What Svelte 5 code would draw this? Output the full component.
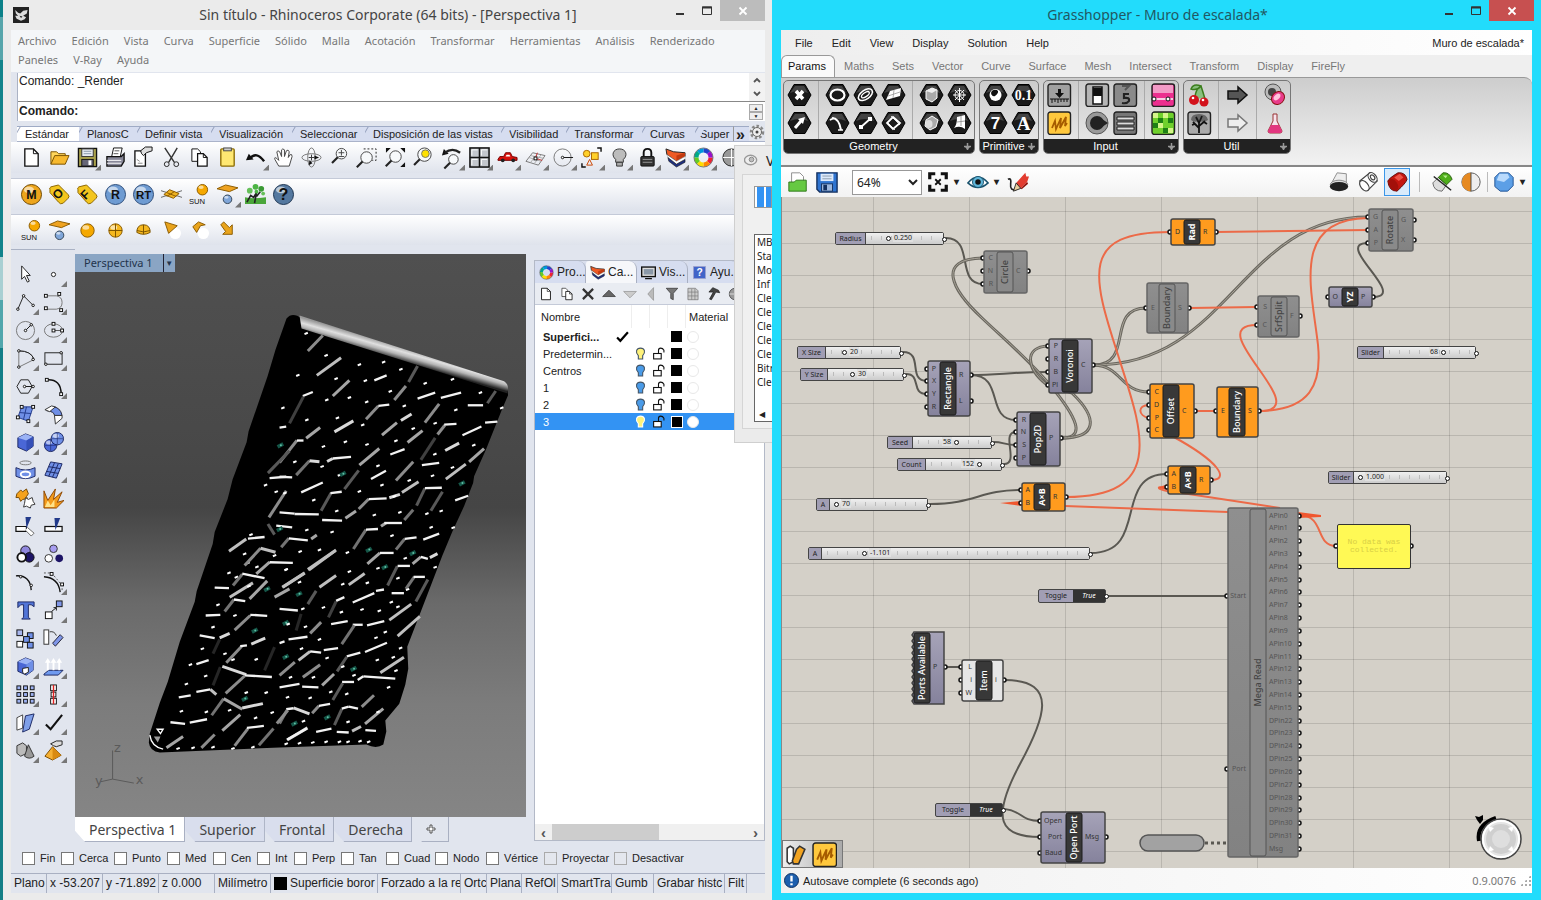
<script>
  const menu = ['Archivo', 'Edición', 'Vista', 'Curva', 'Superficie', 'Sólido', 'Malla', 'Acotación', 'Transformar', 'Herramientas', 'Análisis', 'Renderizado', 'Paneles', 'V-Ray', 'Ayuda'];
  const toolTabs = [['Estándar', 62], ['PlanosC', 58], ['Definir vista', 74], ['Visualización', 81], ['Seleccionar', 73], ['Disposición de las vistas', 136], ['Visibilidad', 65], ['Transformar', 76], ['Curvas', 53], ['Super', 38]];

  const k = 'fill="none" stroke="#222"';
  const g = 'fill="none" stroke="#777"';
  const sq = (x, y, f = '#fff', s = 3) => `<rect x="${x - s / 2}" y="${y - s / 2}" width="${s}" height="${s}" fill="${f}" stroke="#111"/>`;
  const dot = (x, y) => `<circle cx="${x}" cy="${y}" r="1.3" fill="#fff" stroke="#111"/>`;
  const ball = (x, y, r, f, s) => `<circle cx="${x}" cy="${y}" r="${r}" fill="${f}" stroke="${s}"/><ellipse cx="${x - r / 4}" cy="${y - r / 2.2}" rx="${r / 2}" ry="${r / 3}" fill="#fff" opacity=".6"/>`;
  const coin = (t, f, s, size = 13) => ball(11, 11, 10.5, f, s) + `<text x="11" y="${11 + size * 0.36}" text-anchor="middle" font-family="Liberation Sans, sans-serif" font-weight="700" font-size="${size}" fill="#111">${t}</text>`;
  const tag = (t) => `<path d="M1 6Q0 4 2 3L10 1L20 11Q22 13 20 15L15 20Q12 22 10 19L1 9Z" fill="#f3c51e" stroke="#8a6500"/><text transform="translate(9 17) rotate(-45)" font-family="Liberation Sans, sans-serif" font-weight="700" font-size="13" fill="#111">${t}</text>`;
  const lens = (x, y, r) => `<circle cx="${x}" cy="${y}" r="${r}" fill="#f7f9fb" stroke="#444"/><path d="M${x - r * 0.7} ${y + r * 0.7}L${x - r * 0.7 - 6} ${y + r * 0.7 + 6}" stroke="#222" stroke-width="2.2"/>`;
  const sun = ball(14, 6, 5.5, '#f5a800', '#8a5a00') + '<text x="0" y="21" font-family="Liberation Sans, sans-serif" font-size="8" fill="#111">SUN</text>';
  const plane = '<path d="M0 5L9 1L22 4L13 8Z" fill="#efa321" stroke="#8a5a00"/>' + ball(11, 16, 4.5, '#7fa5d8', '#345');
  const sheet = '<path d="M4 2H13L18 7V20H4Z" fill="#fff" stroke="#111" stroke-width="1.4"/><path d="M13 2V7H18" fill="none" stroke="#111"/>';
  const brick = '<path d="M1 2L9 5L21 6V10L12 15L2 8Z" fill="#ee5a24" stroke="#222"/><path d="M12 15V9L21 6V10Z" fill="#c23a10"/><path d="M2 8L12 15L21 10V13L12 18L3 11Z" fill="#fff" stroke="#999" stroke-width=".5"/><path d="M3 11L12 18L21 13V16L12 21L4 15Z" fill="#1e2f80" stroke="#111" stroke-width=".6"/>';
  const wheelColors = ['#e23', '#f80', '#fd0', '#6c2', '#0a8', '#09d', '#24c', '#91c'];
  const wheel = wheelColors.map((c, i) => `<circle cx="11" cy="11" r="7.5" fill="none" stroke="${c}" stroke-width="4.5" stroke-dasharray="5.9 41.3" stroke-dashoffset="${-i * 5.89}"/>`).join('') + '<circle cx="11" cy="11" r="10" fill="none" stroke="#333" stroke-width=".6"/>';
  const bulb = (f) => `<path d="M7 13C2 9 4 2 11 2S20 9 15 13V16H7Z" fill="${f}" stroke="#333"/><path d="M8 16H14V20H8Z" fill="#aaa" stroke="#333"/>`;
  const cube = (f, h, d) => `<path d="M3 6L11 2L19 5V15L12 20L3 16Z" fill="${f}" stroke="#1b2762"/><path d="M3 6L11 2L19 5L12 9Z" fill="${h}"/><path d="M12 9L19 5V15L12 20Z" fill="${d}"/>`;
  const blue = '#6f8fe6';

  const icons = {
    new: sheet,
    open: '<path d="M2 18V5H8L10 7H17V10" fill="#ffd65c" stroke="#7a5200"/><path d="M2 18L6 9H21L17 18Z" fill="#f7b92e" stroke="#7a5200"/>',
    save: '<rect x="1.5" y="1.5" width="19" height="19" fill="#a9a14c" stroke="#111" stroke-width="1.4"/><rect x="5" y="2" width="12" height="8" fill="#e7ebf3" stroke="#333"/><path d="M7 4.500H15M7 7H15" stroke="#89a"/><rect x="5" y="13" width="12" height="7" fill="#667" stroke="#111"/><rect x="12" y="14" width="3" height="5" fill="#fff"/>',
    print: '<path d="M7 10L9 1H18L16 10Z" fill="#fff" stroke="#111"/><path d="M2 10H17L20 7V15L17 20H2Z" fill="#889" stroke="#111" stroke-width="1.4"/><path d="M2 14H17M2 17H17" stroke="#fff"/><path d="M10 4H15M9 7H14" stroke="#555"/>',
    props: '<path d="M2 4H13V20H2Z" fill="#fff" stroke="#111" stroke-width="1.4"/><path d="M8 4L13 0H20V4L14 6L11 9L9 7Z" fill="#ddd" stroke="#111"/><path d="M4 13L7 15M5 17H10" stroke="#888"/>',
    cut: `<path d="M4 1L14 16M17 1L8 16" stroke="#333" stroke-width="1.5"/><circle cx="6" cy="18" r="2.500" ${k}/><circle cx="16" cy="18" r="2.500" ${k}/>`,
    copy: '<path d="M3 2H9L12 5V15H3Z" fill="#fff" stroke="#111"/><path d="M9 7H15L19 11V20H9Z" fill="#fff" stroke="#111" stroke-width="1.3"/><path d="M15 7V11H19" fill="none" stroke="#111"/>',
    paste: '<rect x="4" y="2" width="14" height="18" rx="1" fill="#ffe872" stroke="#8a6a00" stroke-width="1.4"/><rect x="7" y="1" width="8" height="3" fill="#ccc" stroke="#444"/>',
    undo: '<path d="M1 14L4 7L9 13Z" fill="#111"/><path d="M5 12Q12 4 20 15" fill="none" stroke="#111" stroke-width="2.500"/>',
    hand: '<path d="M6 20L2 13Q1 10 4 12L6 14L4 5Q5 3 7 5L9 10L9 3Q10 1 12 3V10L14 4Q16 2 17 5L16 11L18 8Q20 7 20 10L17 20Z" fill="#fff" stroke="#444"/>',
    orbit: `<ellipse cx="11" cy="11" rx="10" ry="4" ${g}/><ellipse cx="11" cy="11" rx="4" ry="10" ${g}/><path d="M8 11H14M11 8V14" stroke="#333"/><path d="M9 14L12 17L8 19ZM14 9L19 11L14 13Z" fill="#111"/>`,
    zoom: lens(13, 7, 5.5) + '<path d="M10 6H16M13 3V9M10 10H16" stroke="#444"/>',
    zoomWin: lens(10, 11, 6) + `<path d="M7 2H20V14H16" ${k} stroke-dasharray="2 2"/>`,
    zoomExt: lens(11, 10, 6) + '<path d="M1 1H6L1 6ZM21 1H16L21 6ZM21 21H16L21 16Z" fill="#111"/>',
    zoomSel: lens(12, 8, 7) + '<circle cx="13" cy="7" r="4" fill="#ffe100" stroke="#776"/>',
    zoomPrev: lens(13, 13, 5) + '<path d="M1 9L3 2L8 7Z" fill="#111"/><path d="M4 6Q12 0 20 6" fill="none" stroke="#222" stroke-width="2.500"/>',
    four: '<rect x="1" y="1" width="20" height="20" fill="#c3c7cd" stroke="#111" stroke-width="1.600"/><path d="M11 1V21M1 11H21" stroke="#111" stroke-width="1.600"/><path d="M3 9V3H9M13 9V3H19M3 19V13H9M13 19V13H19" fill="none" stroke="#fff"/>',
    car: '<path d="M1 13L3 10L7 10L9 6H14L16 10L21 11V14H1Z" fill="#d8120c" stroke="#700"/><circle cx="6" cy="14" r="2" fill="#222"/><circle cx="17" cy="14" r="2" fill="#222"/><path d="M10 8H13L14 10H9Z" fill="#fff"/>',
    cplane: `<path d="M1 15L8 6L21 9L14 19Z" ${g}/><path d="M4 11L17 15M6 9L20 12M6 16L13 7M10 17L17 8" stroke="#aaa"/><path d="M11 12L18 14M11 12L13 6" stroke="#c33"/>` + sq(11, 12),
    circleView: `<circle cx="10" cy="11" r="9" ${g}/><path d="M10 11H21" stroke="#111"/>` + dot(10, 11),
    named: '<circle cx="6" cy="7" r="3.500" fill="#ffd12b" stroke="#a60"/><rect x="11" y="6" width="7" height="7" fill="#ffd12b" stroke="#a60"/><path d="M6 19L9 13L12 19Z" fill="none" stroke="#c40"/><path d="M17 1H21V5M1 17V21H5" fill="none" stroke="#111" stroke-width="1.5"/>',
    bulbGray: bulb('#bcbcbc'),
    lock: '<path d="M7 10V6Q7 2 11 2T15 6V10" fill="none" stroke="#111" stroke-width="2"/><rect x="4" y="10" width="14" height="10" rx="1" fill="#333" stroke="#111"/><path d="M6 13H16M6 16H16" stroke="#999"/>',
    layers: brick,
    wheel,
    globe: '<circle cx="11" cy="11" r="9" fill="#999" stroke="#222"/><path d="M11 2V20M2 11H20" stroke="#fff"/>',
    m: coin('M', '#eda51c', '#6b4500'), o: tag('O'), f: tag('F'), r: coin('R', '#6e9bd2', '#2b4a78'), rt: coin('RT', '#6e9bd2', '#2b4a78', 12),
    vplane: '<path d="M0 7L22 14M0 14L22 7" stroke="#666"/><path d="M3 11L9 6L19 10L13 15Z" fill="#efb321" stroke="#8a5a00"/><path d="M6 9L16 13M6 13L14 8" stroke="#8a5a00"/>',
    sun, plane,
    tree: '<path d="M0 20V14Q8 16 22 14V21H0Z" fill="#4aa63a"/><path d="M2 19L6 12L9 14L12 9L10 20M12 13L16 8" fill="none" stroke="#222" stroke-width="1.700"/><circle cx="11" cy="3" r="3" fill="#4cb444"/><circle cx="5" cy="7" r="3" fill="#65c059"/><circle cx="17" cy="5" r="3" fill="#3a9a35"/><circle cx="19" cy="10" r="2" fill="#65c059"/><circle cx="12" cy="8" r="2" fill="#4cb444"/>',
    help: coin('?', '#54789f', '#1c3350', 17),
    orb: ball(11, 11, 7, '#f5a800', '#8a5a00'),
    orbGrid: ball(11, 11, 7, '#f5b820', '#8a5a00') + '<path d="M11 4V18M4 11H18" stroke="#7a5200"/>',
    dome: '<path d="M4 13Q4 5 11 5T18 13Q11 17 4 13Z" fill="#f5b820" stroke="#7a5200"/><path d="M11 5V15M4 11Q11 14 18 11" fill="none" stroke="#7a5200"/>',
    spot: '<circle cx="15" cy="14" r="6" fill="#fff"/><path d="M4 2L17 6L8 14Z" fill="#e9a41c" stroke="#8a5a00"/>',
    ies: '<circle cx="15" cy="14" r="6" fill="#fff"/><path d="M4 7L10 2L17 5L12 6L8 13Z" fill="#e9a41c" stroke="#8a5a00"/>',
    arrowDir: '<path d="M4 5L7 2L13 8L16 5V15H6L9 12Z" fill="#e9a41c" stroke="#8a5a00"/>',
    pointer: '<path d="M7 2V16L10 13L13 19L15 18L12 12H16Z" fill="#fff" stroke="#222"/>',
    point: '<circle cx="11" cy="11" r="2.2" fill="#fff" stroke="#222"/>',
    polyline: `<path d="M3 18L9 4L19 14" ${k}/>` + dot(3, 18) + dot(9, 4) + dot(19, 14),
    curve: `<path d="M3 4H14Q20 5 20 11T14 18H3" ${g}/>` + sq(3, 4) + sq(3, 17) + sq(17, 2) + sq(19, 19),
    circle: `<circle cx="11" cy="11" r="9.500" ${g}/><path d="M11 11L17 5" stroke="#111"/>` + dot(11, 11) + dot(17, 5),
    ellipse: `<ellipse cx="11" cy="11" rx="9.500" ry="7" ${g}/><path d="M11 11H20" stroke="#555"/>` + sq(11, 11) + sq(11, 4) + sq(20, 11),
    arc: `<path d="M4 20V3Q17 3 20 12Z" ${g}/><path d="M4 3Q17 3 20 12" ${k}/>` + dot(4, 20) + dot(4, 3) + dot(19, 12),
    rect: `<rect x="2" y="5" width="18" height="12" ${k}/>` + dot(3, 17) + dot(19, 5),
    polygon: `<path d="M2 11L6 4H14L18 11L14 18H6Z" ${k}/><path d="M10 11H19" stroke="#111"/>` + dot(10, 11) + dot(19, 11),
    fillet: '<path d="M4 4Q19 3 19 19" fill="none" stroke="#111" stroke-width="1.600"/>' + sq(4, 4) + sq(19, 19),
    surface: `<path d="M7 3H19L14 18L3 14Z" fill="${blue}" stroke="#223a8a"/><path d="M12 3L9 16M5 9L17 10" stroke="#223a8a"/>` + sq(7, 3) + sq(19, 3) + sq(3, 14) + sq(14, 18),
    blend: `<path d="M10 3Q18 3 20 12L12 12Q12 8 4 7Z" fill="${blue}" stroke="#223"/><path d="M2 6L9 2L13 3L7 8ZM12 12L20 12V15L13 21Z" fill="#fff" stroke="#333"/>`,
    box: cube('#4a67d6', '#9bb3f5', '#3550b8'),
    spheres: ball(8, 14, 6.5, '#4a67d6', '#1b2762') + ball(15, 7, 6.5, '#6f8fe6', '#1b2762') + '<path d="M15 1V13M9 7H21M8 8V20M2 14H14" stroke="#1b2762" stroke-width=".6"/>',
    project: `<ellipse cx="11" cy="3" rx="6" ry="2" ${g}/><path d="M1 8Q11 13 21 8V17Q11 22 1 17Z" fill="${blue}" stroke="#1b2762"/><ellipse cx="11" cy="15" rx="5" ry="3" fill="none" stroke="#fff" stroke-width="2"/>`,
    meshIcon: `<path d="M8 2L20 4L14 19L2 16Z" fill="${blue}" stroke="#1b2762"/><path d="M12 3L6 17M16 4L10 18M6 7L18 9M4 12L16 14" stroke="#1b2762"/>`,
    puzzle: '<path d="M2 6L6 2L8 4L12 1L14 6L12 9L13 11L8 12L6 14L4 10L1 10Z" fill="#f5a21c" stroke="#734600"/><path d="M11 10L14 12L18 10L19 14L21 17L17 18L16 21L12 19L9 20L10 16Z" fill="#fff" stroke="#333"/>',
    explode: '<path d="M1 21V3L5 13L13 1L11 12L20 4L15 15L22 13L14 21Z" fill="#f49b1c" stroke="#8a4500"/><path d="M2 20L5 13L8 18L12 12L12 20Z" fill="#ffe28a"/>',
    trim: '<path d="M1 11H12V16H1Z" fill="#fff" stroke="#111" stroke-width="1.300"/><path d="M11 1H17L12 13Z" fill="#223a8a"/><path d="M13 12L20 18L17 21L11 15" fill="#fff" stroke="#666"/>',
    split: '<rect x="2" y="11" width="18" height="5" fill="#fff" stroke="#111" stroke-width="1.300"/><path d="M12 2H18L13 15Z" fill="#223a8a"/>',
    group: '<circle cx="11" cy="7" r="5" fill="#8f86dc" stroke="#111"/><circle cx="15" cy="14" r="5" fill="#1d1466" stroke="#111"/><circle cx="7" cy="14" r="4.500" fill="#fff" stroke="#111" stroke-width="2"/>',
    ungroup: '<circle cx="11" cy="5" r="4" fill="#a79df0" stroke="#333"/><circle cx="6" cy="15" r="4" fill="#fff" stroke="#333"/><circle cx="17" cy="15" r="4" fill="#1d1466"/>',
    editPts: '<path d="M1 4Q16 3 17 19" fill="none" stroke="#111" stroke-width="1.400"/>' + dot(6, 5) + dot(17, 14),
    ctrlPts: '<path d="M1 5Q16 6 18 21" fill="none" stroke="#111" stroke-width="1.400"/><path d="M1 1H9L20 14V20" fill="none" stroke="#555" stroke-dasharray="2 2"/>' + sq(9, 2) + sq(20, 13),
    text: '<path d="M3 2H20V7L17 5H14V18L16 20H7L9 18V5H6L3 8Z" fill="#5275d8" stroke="#1b2762"/>',
    move: sq(6, 16, '#fff', 7) + sq(17, 4, '#7f96e8', 6) + '<path d="M9 12L14 8M14 8V11M14 8H11" stroke="#111" fill="none"/>',
    array: sq(5, 5, '#a8b6ee', 6) + sq(16, 8, blue, 6) + sq(12, 12, blue, 6) + sq(5, 17, '#fff', 6) + sq(16, 18, blue, 6),
    orient: '<rect x="1" y="2" width="5" height="15" fill="#fff" stroke="#333"/><path d="M18 7L21 10L13 19L10 16Z" fill="#7f96e8" stroke="#223"/><path d="M7 4Q12 3 14 8" fill="none" stroke="#333"/>',
    boxCut: cube('#4a67d6', '#9bb3f5', blue) + '<path d="M8 13L14 12V17L10 19L8 17Z" fill="#fff" stroke="#222"/>',
    normals: '<path d="M1 19L6 15H21L16 20H1Z" fill="#6f9af0" stroke="#1b2762"/><path d="M5 15V5M11 15V5M17 15V5" stroke="#fff" stroke-width="2"/><path d="M2 7L5 2L8 7ZM8 7L11 2L14 7ZM14 7L17 2L20 7Z" fill="#fff"/>',
    grid9: [4, 11, 18].map((x) => [4, 11, 18].map((y) => sq(x, y, '#9db1f2', 4)).join('')).join(''),
    align: sq(11, 4, '#fff', 6) + sq(11, 11, '#fff', 5) + sq(11, 18, '#fff', 6) + '<path d="M11 1V21" stroke="#d22" stroke-width="1.500" fill="none"/>',
    flip: '<path d="M2 6L8 3V17L2 19Z" fill="#fff" stroke="#444"/><path d="M11 4L20 2L15 18L8 21Z" fill="#7f9fe8" stroke="#1b2762"/>',
    check: '<path d="M3 13L8 18L20 3" fill="none" stroke="#111" stroke-width="2.200"/>',
    solids: '<path d="M2 6L8 3L12 6V14L6 17L2 14Z" fill="#bbb" stroke="#333"/><path d="M14 5L20 17Q15 21 10 17Z" fill="#999" stroke="#333"/>',
    pyramid: '<path d="M10 7L19 16L10 21L2 17Z" fill="#f5b033" stroke="#7a4a00"/><path d="M10 7L19 16L10 21Z" fill="#d98a10"/><path d="M8 4L14 1H20V5L14 7L11 6Z" fill="#ddd" stroke="#222"/>',
    del: '<path d="M3 3L19 19M19 3L3 19" stroke="#333" stroke-width="3.500"/>',
    up: '<path d="M1 15L11 5L21 15Z" fill="#666" stroke="#222"/>',
    down: '<path d="M1 7H21L11 17Z" fill="#ccc" stroke="#888"/>',
    left: '<path d="M15 1V21L6 11Z" fill="#bbb" stroke="#888"/>',
    filter: '<path d="M2 2H20L13 10V20L9 18V10Z" fill="#777" stroke="#222"/>',
    sheetGrid: '<path d="M3 2H15L19 6V20H3Z" fill="#ccc" stroke="#666"/><path d="M3 8H19M3 14H19M9 3V20M14 3V20" stroke="#777"/>',
    hammer: '<path d="M3 8L9 1L18 5L20 9L14 8L7 20L4 19L10 8Z" fill="#444" stroke="#111"/>',
    screen: '<rect x="1" y="3" width="20" height="14" fill="#ddd" stroke="#111" stroke-width="2"/><rect x="4" y="6" width="14" height="8" fill="#8a98a8"/><path d="M6 20H16" stroke="#111" stroke-width="2"/>',
    book: '<rect x="2" y="2" width="18" height="18" fill="#4264c8" stroke="#aac"/><text x="11" y="16" text-anchor="middle" font-family="Liberation Sans, sans-serif" font-weight="700" font-size="15" fill="#fff">?</text>',
    rhino: '<rect width="22" height="22" fill="#222"/><path d="M3 4L7 8L10 9L14 5L20 4L19 9L14 12L18 14L16 17L11 19L5 16L3 12L7 12L4 9Z" fill="#ddd"/><path d="M9 12L13 13L11 15Z" fill="#222"/>'
  };

  const std = ['new', 'open', 'save*', 'print', 'props', 'cut', 'copy', 'paste', 'undo*', 'hand', 'orbit', 'zoom', 'zoomWin', 'zoomExt', 'zoomSel', 'zoomPrev*', 'four*', 'car*', 'cplane*', 'circleView*', 'named*', 'bulbGray*', 'lock*', 'layers*', 'wheel*', 'globe'];
  const vray = ['m', 'o', 'f', 'r', 'rt', 'vplane', 'sun', 'plane*', 'tree', 'help'];
  const lights = ['sun', 'plane', 'orb', 'orbGrid', 'dome', 'spot', 'ies', 'arrowDir'];
  const palette = ['pointer', 'point*', 'polyline*', 'curve*', 'circle*', 'ellipse*', 'arc*', 'rect*', 'polygon*', 'fillet*', 'surface*', 'blend*', 'box*', 'spheres*', 'project*', 'meshIcon*', 'puzzle', 'explode', 'trim', 'split', 'group*', 'ungroup', 'editPts', 'ctrlPts*', 'text', 'move*', 'array', 'orient', 'boxCut*', 'normals*', 'grid9*', 'align*', 'flip*', 'check*', 'solids*', 'pyramid*'];
  const panelTools = ['new', 'copy', 'del', 'up', 'down', 'left', 'filter', 'sheetGrid', 'hammer', 'globe'];
  const panelTabs = [['wheel', 'Pro...'], ['layers', 'Ca...'], ['screen', 'Vis...'], ['book', 'Ayu...']];
  const layers = [['Superfici...', ''], ['Predetermin...', '#fff27a'], ['Centros', '#4a9be8'], ['1', '#4a9be8'], ['2', '#4a9be8'], ['3', '#fff27a']];
  const snaps = [['Fin', 39], ['Cerca', 53], ['Punto', 53], ['Med', 46], ['Cen', 44], ['Int', 37], ['Perp', 47], ['Tan', 45], ['Cuad', 49], ['Nodo', 51], ['Vértice', 58], ['Proyectar', 70], ['Desactivar', 76]];
  const status = [['Plano', 36], ['x -53.207', 56], ['y -71.892', 56], ['z 0.000', 56], ['Milímetro', 56], ['Superficie boror', 107], ['Forzado a la re', 83], ['Ortc', 26], ['Plana', 35], ['RefOl', 36], ['SmartTra', 54], ['Gumb', 42], ['Grabar histc', 71], ['Filt', 22]];
  const messages = ['MB', 'Sta', 'Mo', 'Inf', 'Cle', 'Cle', 'Cle', 'Cle', 'Cle', 'Bitr', 'Cle'];

  // Slits of the wall: x1 y1 x2 y2 and brightness, in thirds of a pixel from (280, 300).
  const slits = `85 155 130 108 5|112 228 185 175 7|160 290 210 243 6|285 243 322 228 9|70 290 100 278 9|30 372 72 292 2|345 302 380 260 5|388 248 415 200 3|415 298 468 280 9|485 296 546 280 9|260 360 297 320 5|297 320 330 316 9|308 408 353 370 6|365 364 397 344 8|437 370 480 314 5|625 312 650 275 3|566 318 612 318 9|165 398 222 365 8|80 417 122 385 6|0 490 52 424 5|52 424 72 424 9|143 487 160 478 8|160 478 215 473 9|385 430 430 394 6|475 406 497 378 5|495 376 532 374 9|550 408 607 382 9|240 498 300 448 6|333 466 376 450 9|425 482 468 416 2|498 454 540 432 8|618 370 655 367 9|570 488 615 448 6|50 528 90 485 4|90 485 120 488 8|275 540 320 515 9|195 570 238 514 3|350 544 402 488 5|428 498 480 491 9|500 540 560 495 7|528 604 567 590 9|65 580 130 550 9|125 635 155 582 3|153 582 187 578 9|238 630 268 600 5|268 600 322 598 9|330 596 362 586 8|368 580 418 548 7|412 620 437 568 3|437 567 488 566 9|455 635 490 578 3|0 640 45 644 9|45 645 118 646 9|128 663 188 665 9|198 658 230 636 6|375 663 402 632 4|305 682 320 672 6|315 672 368 672 9|432 722 480 704 9|222 750 260 692 4|260 692 296 690 9|5 745 28 718 4|28 718 85 724 9|95 720 112 708 6|350 752 376 720 4|376 720 412 715 9|264 795 302 762 6|302 762 343 762 9|85 812 170 753 7|8 865 76 822 7|120 865 170 830 7|208 858 256 824 7|400 795 425 774 6|425 774 446 780 9|452 776 475 764 8|325 860 354 802 3|355 801 392 801 9|380 870 405 834 4|403 834 437 834 9|410 908 446 842 3|85 916 110 876 3|170 906 195 895 9|220 911 285 883 9|290 876 314 872 9|337 883 374 883 9|0 930 55 935 9|147 956 170 908 2|330 964 396 916 7|355 1012 422 953 7|92 1004 125 970 5|155 976 205 967 9|220 978 250 978 9|263 980 315 967 9|187 1036 225 980 4|0 1033 15 1028 9|27 1022 84 1014 9|57 1085 92 1058 7|92 1058 125 1062 9|133 1054 176 1048 9|202 1073 243 1062 9|257 1060 323 1032 9|0 1130 46 1090 5|70 1136 122 1098 5|173 1118 202 1075 3|303 1122 374 1076 7|0 1166 60 1156 9|68 1164 117 1166 9|128 1160 164 1126 6|188 1150 224 1150 9|160 1204 190 1154 3|235 1144 252 1133 9|252 1133 348 1140 9|0 1275 22 1235 4|20 1232 42 1229 9|42 1228 90 1246 8|98 1244 118 1222 5|118 1222 152 1216 9|165 1280 187 1232 3|187 1230 208 1224 9|208 1224 236 1230 9|247 1225 284 1190 5|257 1276 312 1230 6|24 1324 84 1288 8|110 1300 156 1290 9|172 1300 208 1302 9|218 1298 245 1284 7|258 1295 290 1297 9|0 385 20 382 9|0 533 38 535 9|-35 522 30 455 3|-32 655 20 575 5|-15 707 -35 675 3|-95 719 -45 714 9|-30 537 20 533 9|-10 680 38 685 9|-70 825 -30 790 6|-30 790 40 792 9|-150 895 -80 852 7|-15 895 30 870 6`
    .split('|').map((s) => s.split(' ').map(Number));
  // Lower left part of the wall, in thirds of a pixel from (0, 540).
  const slitsLow = `688 37 740 0 7|735 80 783 28 5|783 28 828 40 7|850 145 915 103 7|928 93 1008 35 7|700 140 728 106 4|728 104 795 118 9|750 180 803 126 6|645 146 688 148 9|675 218 703 182 4|703 182 737 187 9|618 230 662 228 9|705 274 752 230 5|752 228 803 231 9|600 290 645 298 9|660 297 690 284 8|640 345 660 302 1|755 316 797 298 8|680 372 727 322 5|722 322 742 320 9|590 376 627 364 9|668 383 740 408 8|735 410 817 415 9|678 464 735 412 5|640 440 662 385 1|537 476 573 470 9|590 460 632 452 9|632 452 650 468 7|636 530 672 480 4|672 480 728 512 6|728 508 790 495 8|512 551 556 556 9|570 552 622 542 9|668 576 722 528 6|500 628 550 594 6|605 628 645 588 5|705 622 745 570 5|742 568 793 562 9|778 620 822 570 4|832 555 865 515 5|862 604 922 570 9|795 395 825 325 1|890 275 905 225 1`
    .split('|').map((s) => s.split(' ').map(Number));
  const specks = `80 102|140 168|240 196|313 188|365 210|55 228|170 238|258 244|438 252|520 240|333 276|142 302|210 295|262 308|375 320|10 326|82 362|174 356|250 377|402 388|468 372|604 280|668 326|530 332|132 442|198 428|263 436|350 425|467 465|584 438|46 488|128 502|296 500|520 505|180 528|308 558|390 544|460 530|16 582|103 603|240 577|345 592|172 636|285 648|362 640|443 644|486 636|522 686|456 685|82 693|158 699|338 710|62 758|120 753|204 761|20 812|210 818|378 778|468 805|296 808|264 852|356 838|60 850|190 856|385 872|336 910|132 926|248 932|70 930|186 940|300 936|356 924|78 984|318 1000|120 1022|290 1017|66 1050|364 1048|20 1073|143 1078|294 1084|190 1104|342 1076|102 1136|33 1136|224 1130|350 1116|24 1196|92 1198|202 1186|328 1166|154 1180|72 1268|206 1270|296 1240|60 1334|100 1332|140 1330|180 1330|206 1330|242 1328|268 1330|20 1336|-42 558|-10 578|-86 707|-15 770|-95 792|-130 835`
    .split('|').map((s) => s.split(' ').map(Number));
  const specksLow = `735 45|688 102|772 84|748 142|655 198|706 230|640 265|608 330|676 345|700 363|770 362|572 378|618 412|560 436|740 462|800 462|545 518|690 515|620 520|768 538|535 630|580 628|640 626|700 630|760 626|818 522|860 92|866 256`
    .split('|').map((s) => s.split(' ').map(Number));
  const gems = [[268, 752], [316, 804], [400, 762], [58, 885], [548, 552], [190, 524], [143, 1256], [18, 972], [18, 1074], [222, 1110], [2, 438], [44, 1275], [0, 690], [-38, 870], [-75, 995], [-105, 1200]];

  const ghMenu = ['File', 'Edit', 'View', 'Display', 'Solution', 'Help'];
  const ghTabs = ['Params', 'Maths', 'Sets', 'Vector', 'Curve', 'Surface', 'Mesh', 'Intersect', 'Transform', 'Display', 'FireFly'];
  const hex = (c) => `<path d="M1 12L7 1.500H18L24 12L18 22.500H7Z" fill="#1a1a1a" stroke="#000"/><path d="M3 10L8 3H17L21 10Q12 6 3 10Z" fill="#555" opacity=".7"/>${c}`;
  const tile = (f, c) => `<rect x="1" y="1" width="22.500" height="22.500" rx="2.500" fill="${f}" stroke="#222" stroke-width="1.400"/>${c}`;
  const serif = 'font-family="Liberation Serif, serif" font-weight="700" fill="#fff" text-anchor="middle"';
  const w = 'fill="none" stroke="#fff"';
  const gi = {
    x: hex(`<path d="M9 8L16 16M16 8L9 16" ${w} stroke-width="3.500"/>`),
    arrow: hex(`<path d="M8 17L14 10" ${w} stroke-width="3"/><path d="M11 8L18 6L16 13Z" fill="#fff"/>`),
    ring: hex(`<ellipse cx="12.500" cy="12" rx="7" ry="5.500" ${w} stroke-width="2.200"/>`),
    rings: hex(`<g transform="rotate(-35 12 12)"><ellipse cx="12.500" cy="12" rx="8" ry="4.500" ${w} stroke-width="1.500"/><ellipse cx="12.500" cy="12" rx="4.500" ry="2" ${w} stroke-width="1.300"/></g>`),
    quad: hex('<path d="M5 17L9 8L20 5L19 13Z" fill="#fff"/><path d="M13 7L12 15M7 13L19 9" stroke="#999" stroke-width=".8"/>'),
    arc: hex(`<path d="M7 7Q14 7 16 19" ${w} stroke-width="2"/><path d="M9 7L5 9M13 19H18" ${w} stroke-width="1.500"/>`),
    line: hex(`<path d="M8 16L17 8" ${w} stroke-width="1.800"/><rect x="6" y="14" width="4" height="4" fill="#fff"/><rect x="15" y="6" width="4" height="4" fill="#fff"/>`),
    diamond: hex(`<path d="M12 6L19 12L12 18L6 12Z" ${w} stroke-width="1.800"/><path d="M10 5L19 14M6 11L14 19" ${w} stroke-width=".8"/>`),
    box: hex('<path d="M7 8L13 5L18 7V15L13 19L7 16Z" fill="#aaa" stroke="#fff"/><path d="M7 8L13 5L18 7L13 10Z" fill="#eee"/>'),
    mesh: hex(`<path d="M6 12H19M12.500 5V19M8 7L17 17M17 7L8 17" ${w}/><circle cx="12.500" cy="12" r="4.500" ${w}/>`),
    brep: hex('<path d="M7 9L13 5L19 9L17 16L11 19L6 15Z" fill="#aaa" stroke="#fff"/><ellipse cx="10" cy="13" rx="3.500" ry="4" fill="#ddd"/>'),
    surf: hex('<path d="M7 17Q10 14 10 6L18 4V18Q13 14 7 17Z" fill="#fff"/><path d="M14 5V15M10 11L18 10" stroke="#888" stroke-width=".8"/>'),
    bool: hex('<circle cx="12.500" cy="12" r="6" fill="#fff"/><path d="M8 10Q9 6 14 7Q17 9 12 13Q9 14 8 10Z" fill="#111"/>'),
    num: hex(`<text x="12.500" y="17" font-size="14" ${serif}>0.1</text>`),
    int: hex(`<text x="12.500" y="18" font-size="17" font-family="Liberation Sans, sans-serif" font-weight="700" fill="#fff" text-anchor="middle">7</text>`),
    str: hex(`<text x="12.500" y="18.500" font-size="19" ${serif}>A</text>`),
    slider: tile('#a0a0a0', '<path d="M3 16H22M5 16V20M8 16V19M11 16V20M14 16V19M17 16V19M20 16V19" stroke="#111"/><path d="M11 6H14V10H17L12.500 15L8 10H11Z" fill="#111"/>'),
    graph: tile('#ffc83d', '<path d="M5 17L8 10L9 18L14 7L13 17L19 6L18 15L20 12" fill="none" stroke="#a65c00" stroke-width="1.800"/>'),
    toggle: tile('#b5b5b5', '<rect x="8" y="4" width="9" height="17" fill="#fff" stroke="#111" stroke-width="1.500"/><rect x="8" y="5" width="9" height="8" fill="#111"/>'),
    digit: tile('#8a8a8a', '<path d="M9 3H16L12 7" fill="none" stroke="#555" stroke-width="2"/><path d="M16 11H11V15Q17 14 16 18Q14 21 9 20" fill="none" stroke="#222" stroke-width="2.200"/>'),
    knob: '<circle cx="12" cy="12" r="11" fill="#999" stroke="#555"/><circle cx="12" cy="12" r="7" fill="#222"/><path d="M17 8L23 12L17 16Z" fill="#222"/>',
    list: tile('#777', '<path d="M4 6H21V9H4ZM4 11H21V14H4ZM4 16H21V19H4Z" fill="#ddd" stroke="#222"/>'),
    pink: tile('#ec2f8f', '<path d="M2 2H22V10H2Z" fill="#f29ac6"/><path d="M2 16H22" stroke="#fff" stroke-width="1.500"/><circle cx="3" cy="16" r="2" fill="#fff" stroke="#111"/><circle cx="17" cy="16" r="2" fill="#fff" stroke="#111"/>'),
    green: tile('#6fd02c', '<path d="M2 2H7V7H2ZM12 2H17V7H12ZM7 12H12V17H7ZM17 17H22V22H17Z" fill="#d6f58a"/><path d="M7 7H12V12H7ZM2 12H7V17H2ZM12 17H17V22H12ZM17 7H22V12H17Z" fill="#1d7f14"/>'),
    cherry: '<path d="M8 15Q8 7 14 3Q16 9 18 16M14 3Q6 0 4 6Q10 8 14 3" fill="#3fae2a" fill-opacity=".5" stroke="#3b7d1c" stroke-width="1.500"/><circle cx="7" cy="17" r="5" fill="#d3121b"/><circle cx="17" cy="19" r="4.500" fill="#d3121b"/><circle cx="6" cy="15" r="1.300" fill="#fff"/><circle cx="16" cy="17" r="1.300" fill="#fff"/>',
    treeTile: tile('#aaa', '<path d="M12 22V12M12 17L6 11M12 15L18 10M12 12L9 6M12 12L15 5M8 13L5 14M17 11L20 13" stroke="#111" stroke-width="1.800"/><path d="M4 9Q4 3 12 3T21 9Q17 12 12 10Q7 12 4 9Z" fill="#222" opacity=".5"/>'),
    solid: '<path d="M3 8H13V4L22 12L13 20V16H3Z" fill="#555" stroke="#111" stroke-width="1.500"/>',
    hollow: '<path d="M3 8H13V4L22 12L13 20V16H3Z" fill="#eee" stroke="#777" stroke-width="1.500"/>',
    eggs: '<circle cx="10" cy="9" r="8" fill="#bbb" stroke="#555"/><circle cx="9" cy="9" r="4" fill="#444"/><ellipse cx="15" cy="15" rx="7" ry="6" transform="rotate(-45 15 15)" fill="#e83b8a" stroke="#811"/><ellipse cx="14" cy="14" rx="4" ry="2.500" transform="rotate(-45 14 14)" fill="#ffc4dd"/>',
    flask: '<path d="M10 3H14V10L19 20Q19 22 17 22H7Q5 22 5 20L10 10Z" fill="#f7e3ec" stroke="#933"/><path d="M8 14H16L19 20Q19 22 17 22H7Q5 22 5 20Z" fill="#e2367f"/>'
  };
  const groups = [
    ['Geometry', [[['x', 'arrow']], [['ring', 'arc'], ['rings', 'line'], ['quad', 'diamond']], [['box', 'brep'], ['mesh', 'surf']]]],
    ['Primitive', [[['bool', 'int'], ['num', 'str']]]],
    ['Input', [[['slider', 'graph']], [['toggle', 'knob'], ['digit', 'list']], [['pink', 'green']]]],
    ['Util', [[['cherry', 'treeTile']], [['solid', 'hollow']], [['eggs', 'flask']]]]
  ];

  const pins = [...Array.from({ length: 16 }, (_, i) => 'APin' + i), ...Array.from({ length: 10 }, (_, i) => 'DPin' + (22 + i)), 'Msg'].map((n, i) => [n, Math.round(515.5 + i * 12.82)]);
  const nodes = [
    { x: 984, y: 251, w: 43, h: 42, lx: 997, t: 'Circle', k: 'off', i: [['C', 258], ['N', 271], ['R', 284]], o: [['C', 271]] },
    { x: 928, y: 361, w: 42, h: 55, lx: 940, t: 'Rectangle', k: 'std', i: [['P', 369], ['X', 381], ['Y', 394], ['R', 407]], o: [['R', 375], ['L', 401]] },
    { x: 1049, y: 339, w: 43, h: 54, lx: 1062, t: 'Voronoi', k: 'std', i: [['P', 346], ['R', 359], ['B', 372], ['Pl', 385]], o: [['C', 365]] },
    { x: 1017, y: 412, w: 43, h: 54, lx: 1030, t: 'Pop2D', k: 'std', i: [['R', 420], ['N', 432], ['S', 445], ['P', 458]], o: [['P', 438]] },
    { x: 1022, y: 483, w: 43, h: 28, lx: 1034, t: 'A×B', b: 1, k: 'sel', i: [['A', 490], ['B', 503]], o: [['R', 497]] },
    { x: 1171, y: 219, w: 44, h: 26, lx: 1184, t: 'Rad', b: 1, k: 'sel', i: [['D', 232]], o: [['R', 232]] },
    { x: 1369, y: 209, w: 44, h: 42, lx: 1382, t: 'Rotate', k: 'off', i: [['G', 217], ['A', 230], ['P', 243]], o: [['G', 220], ['X', 240]] },
    { x: 1147, y: 283, w: 41, h: 50, lx: 1159, t: 'Boundary', k: 'off', i: [['E', 308]], o: [['S', 308]] },
    { x: 1258, y: 296, w: 41, h: 41, lx: 1271, t: 'SrfSplit', k: 'off', i: [['S', 307], ['C', 325]], o: [['F', 316]] },
    { x: 1329, y: 287, w: 43, h: 20, lx: 1342, t: 'YZ', b: 1, k: 'std', i: [['O', 297]], o: [['P', 297]] },
    { x: 1150, y: 384, w: 44, h: 54, lx: 1163, t: 'Offset', k: 'sel', i: [['C', 392], ['D', 405], ['P', 418], ['C', 430]], o: [['C', 411]] },
    { x: 1217, y: 387, w: 41, h: 50, lx: 1229, t: 'Boundary', k: 'sel', i: [['E', 411]], o: [['S', 411]] },
    { x: 1168, y: 466, w: 42, h: 28, lx: 1180, t: 'A×B', b: 1, k: 'sel', i: [['A', 474], ['B', 487]], o: [['R', 480]] },
    { x: 1228, y: 508, w: 70, h: 349, lx: 1250, t: 'Mega Read', k: 'off', i: [['Start', 596], ['Port', 769]], o: pins },
    { x: 914, y: 632, w: 30, h: 72, lx: 914, t: 'Ports Available', k: 'std', i: [], o: [['P', 667]], jag: true },
    { x: 962, y: 660, w: 41, h: 41, lx: 976, t: 'Item', k: 'white', i: [['L', 667], ['i', 680], ['W', 693]], o: [['i', 680]] },
    { x: 1041, y: 812, w: 64, h: 51, lx: 1066, t: 'Open Port', k: 'std', i: [['Open', 821], ['Port', 837], ['Baud', 853]], o: [['Msg', 837]] }
  ];
  const sliders = [
    ['Radius', 835, 232, 30, 109, 888, '0.250', 1], ['X Size', 797, 346, 28, 104, 844, '20', 1], ['Y Size', 800, 368, 27, 104, 852, '30', 1],
    ['Seed', 887, 436, 25, 105, 957, '58', -1], ['Count', 897, 458, 28, 105, 980, '152', -1], ['A', 816, 498, 13, 112, 836, '70', 1],
    ['A', 808, 547, 13, 282, 864, '-1.101', 1], ['Slider', 1357, 346, 26, 119, 1444, '68', -1], ['Slider', 1328, 471, 25, 119, 1360, '1.000', 1]
  ];
  const toggles = [[1038, 589], [935, 803]];
  const wires = [
    'M946 238C975 238 955 284 983 284', 'M903 352C924 352 907 381 927 381', 'M906 374C922 374 910 394 927 394', 'M971 375C1000 375 1010 372 1048 372',
    'M971 375C1005 375 985 420 1016 420', 'M994 442C1003 442 1005 445 1016 445', 'M1004 464C1020 464 1000 432 1016 432', 'M930 504C975 504 980 490 1021 490',
    'M1091 553C1150 553 1112 474 1167 474', 'M1374 297C1408 296 1332 243 1368 243', 'M1107 596H1227', 'M946 667H961',
    'M1005 680C1060 680 1044 720 1020 764C990 820 1000 837 1040 837', 'M1004 809C1022 810 1020 821 1040 821'
  ];
  const doubles = [
    'M983 258C935 259 952 290 982 318C1005 340 1030 360 1055 391C1082 425 1082 438 1061 438', 'M1048 346C1024 347 1026 368 1046 384L1072 393C1098 418 1098 438 1061 438',
    'M1094 365C1135 365 1105 308 1146 308', 'M1094 365C1230 365 1240 217 1368 217', 'M1094 365C1122 366 1120 392 1149 392'
  ];
  const reds = [
    'M1066 497C1170 497 1140 425 1118 355C1092 275 1080 232 1170 232', 'M1216 232L1368 230', 'M1190 308L1257 307', 'M1196 411H1216', 'M1260 411C1318 411 1198 325 1257 325',
    'M1260 411C1310 410 1322 385 1318 345C1312 290 1290 219 1368 218', 'M1211 480C1230 480 1220 462 1172 436', 'M1149 405C1137 405 1138 416 1149 418',
    'M1167 487C1152 486 1158 491 1182 493L1280 508', 'M1065 506L1228 512', 'M1300 515C1325 516 1315 546 1336 546'
  ];
</script>

{#snippet tool(name)}
  <button class="tool" aria-label={name.replace('*', '')}>
    <svg viewBox="0 0 22 22" aria-hidden="true">{@html icons[name.replace('*', '')]}</svg>
    {#if name.endsWith('*')}<i class="fly"></i>{/if}
  </button>
{/snippet}

{#snippet controls()}
  <div class="controls">
    <button aria-label="Minimizar"><svg viewBox="0 0 12 12"><path d="M2 9H10" stroke="currentColor" stroke-width="2" /></svg></button>
    <button aria-label="Maximizar"><svg viewBox="0 0 12 12"><path d="M1.500 2H10.500V9.500H1.500Z" fill="none" stroke="currentColor" /><path d="M1 2.500H11" stroke="currentColor" stroke-width="2" /></svg></button>
    <button class="close" aria-label="Cerrar"><svg viewBox="0 0 12 12"><path d="M2.500 2.500L9.500 9.500M9.500 2.500L2.500 9.500" stroke="#fff" stroke-width="1.800" /></svg></button>
  </div>
{/snippet}

<div class="desk">
  <div class="wallpaper"></div>
  <section class="rhino">
    <header class="title"><svg class="app" viewBox="0 0 22 22">{@html icons.rhino}</svg><h1>Sin título - Rhinoceros Corporate (64 bits) - [Perspectiva 1]</h1>{@render controls()}</header>
    <div class="content">
      <nav class="menu">{#each menu as m}<a href="#{m}">{m}</a>{/each}</nav>
      <div class="command">
        <div class="history"><p>Comando: _Render</p><div class="scrollv"><svg viewBox="0 0 10 20"><path d="M2 5L5 2L8 5M2 15L5 18L8 15" fill="none" stroke="#555" stroke-width="1.800" /></svg></div></div>
        <div class="prompt"><label for="cmd">Comando:</label><input id="cmd" /><div class="spin"><button aria-label="Arriba">▲</button><button aria-label="Abajo">▼</button></div></div>
      </div>
      <div class="tooltabs">
        {#each toolTabs as [t, width], i}<button class:on={i === 0} style="width:{width}px">{t}</button>{/each}
        <button class="more">»</button>
        <svg class="gear" viewBox="0 0 16 16"><circle cx="8" cy="8" r="6" fill="#eee" stroke="#888" stroke-width="2.500" stroke-dasharray="2.500 2" /><circle cx="8" cy="8" r="4.500" fill="#eee" stroke="#666" /><circle cx="8" cy="8" r="1.500" fill="#444" /></svg>
      </div>
      <div class="toolbar first">{#each std as n}{@render tool(n)}{/each}</div>
      <div class="toolbar">{#each vray as n}{@render tool(n)}{/each}</div>
      <div class="toolbar last">{#each lights as n}{@render tool(n)}{/each}</div>
      <div class="work">
        <div class="palette">{#each palette as n}{@render tool(n)}{/each}</div>
        <div class="views">
          <div class="viewport">
            <button class="vname"><span>Perspectiva 1</span><b>▼</b></button>
            <svg viewBox="75 256 452 561">
              <defs>
                <linearGradient id="tb" gradientUnits="userSpaceOnUse" x1="403" y1="347" x2="399" y2="361"><stop offset="0" stop-color="#999" /><stop offset=".35" stop-color="#e0e0e0" /><stop offset=".6" stop-color="#b5b5b5" /><stop offset="1" stop-color="#222" /></linearGradient>
              </defs>
              <path d="M287 319Q293 312 302 319L508 386L509 396L503 410L487 450L475 477L474 484L465 507L453 533L443 557L433 583L420 617L408 648L409 670L406 686L400 705L386 722L387 733L384 746Q377 751 367 746L280 749L160 754Q150 753 149 744L150 735L160 704L168 683L180 643L195 603L197 592L213 545L215 533L228 500L233 480L247 443L249 432L268 377L276 350Z" fill="#000" />
              <path d="M300 316L505 382Q511 386 508 394L302 329Z" fill="url(#tb)" />
              <g transform="translate(280 300) scale(.3333)">
                {#each slits as [a, b, c, d, s]}<path d="M{a} {b}L{c} {d}" stroke="hsl(0 0% {s * 10 + 5}%)" stroke-width={s > 8 ? 7 : 9} />{/each}
                {#each specks as [a, b]}<path d="M{a - 5} {b + 2}L{a + 5} {b - 2}" stroke="#fff" stroke-width="6" />{/each}
                {#each gems as [a, b]}<path d="M{a - 8} {b + 5}L{a + 9} {b - 4}" stroke="#155648" stroke-width="11" /><circle cx={a + 2} cy={b} r="3" fill="#5fc0a5" />{/each}
              </g>
              <g transform="translate(0 540) scale(.3333)">
                {#each slitsLow as [a, b, c, d, s]}<path d="M{a} {b}L{c} {d}" stroke="hsl(0 0% {s * 10 + 5}%)" stroke-width={s > 8 ? 7 : 9} />{/each}
                {#each specksLow as [a, b]}<path d="M{a - 5} {b + 2}L{a + 5} {b - 2}" stroke="#fff" stroke-width="6" />{/each}
                <path d="M450 590Q455 625 490 632M472 572H490L482 585Z" fill="none" stroke="#fff" stroke-width="4" /><path d="M462 594H482L474 612Z" fill="#999" />
                <path d="M338 722V636M302 730L338 722L402 734" fill="none" stroke="#5a5a5a" stroke-width="3" />
              </g>
              <g class="axes"><text x="114" y="753">z</text><text x="95" y="787">y</text><text x="136" y="786">x</text></g>
            </svg>
          </div>
          <div class="viewtabs"><button class="on">Perspectiva 1</button><button>Superior</button><button>Frontal</button><button>Derecha</button><button class="plus" aria-label="Nueva vista"><svg viewBox="0 0 10 10"><path d="M4 1H6V4H9V6H6V9H4V6H1V4H4Z" fill="#fff" stroke="#555" /></svg></button></div>
        </div>
        <div class="panel">
          <div class="ptabs">{#each panelTabs as [n, t], i}<button class:on={i === 1}><svg viewBox="0 0 22 22">{@html icons[n]}</svg>{t}</button>{/each}</div>
          <div class="ptools">{#each panelTools as n}<button aria-label={n}><svg viewBox="0 0 22 22">{@html icons[n]}</svg></button>{/each}</div>
          <div class="tablewrap">
            <table>
              <thead><tr><th class="n">Nombre</th><th></th><th></th><th></th><th></th><th class="mat">Material</th></tr></thead>
              <tbody>
                {#each layers as [n, c], i}
                  <tr class:sel={i === 5} class:cur={i === 0}>
                    <td class="n">{n}</td>
                    <td>{#if !i}<svg viewBox="0 0 12 12"><path d="M1 7L4 10L11 2" fill="none" stroke="#000" stroke-width="2" /></svg>{/if}</td>
                    <td>{#if c}<svg viewBox="0 0 12 12"><path d="M4 8C1 5 2 1 6 1S11 5 8 8V11H4Z" fill={c} stroke={i === 5 ? '#fff' : '#456'} /></svg>{/if}</td>
                    <td>{#if c}<svg viewBox="0 0 12 12"><rect x="1.500" y="6" width="7" height="5" fill="#fff" stroke="#111" /><path d="M6 6V3Q6 1 8 1T11 3V5" fill="none" stroke="#111" /></svg>{/if}</td>
                    <td><span class="swatch"></span></td>
                    <td class="mat"><span class="ball"></span></td>
                  </tr>
                {/each}
              </tbody>
            </table>
          </div>
          <div class="hscroll"><button aria-label="Izquierda">‹</button><span></span><button aria-label="Derecha">›</button></div>
        </div>
      </div>
      <div class="snaps">{#each snaps as [s, width], i}<label style="width:{width}px"><input type="checkbox" class:dim={i > 10} />{s}</label>{/each}</div>
      <footer class="status">{#each status as [s, width], i}<span style="width:{width}px">{#if i === 5}<b></b>{/if}{s}</span>{/each}</footer>
    </div>
    <aside class="dialog">
      <div class="dtitle"><svg viewBox="0 0 16 12"><ellipse cx="7" cy="6" rx="6.500" ry="5" fill="#eee" stroke="#999" stroke-width="1.500" /><circle cx="8" cy="5.500" r="2.500" fill="#bbb" stroke="#888" /></svg><span>V</span></div>
      <div class="dbody"><div class="bar"></div><ul>{#each messages as m}<li>{m}</li>{/each}<li class="sc">◀</li></ul></div>
    </aside>
  </section>

  <section class="gh">
    <header class="title"><span></span><h1>Grasshopper - Muro de escalada*</h1>{@render controls()}</header>
    <div class="ghbody">
      <nav class="ghmenu">{#each ghMenu as m}<a href="#{m}">{m}</a>{/each}<span>Muro de escalada*</span></nav>
      <div class="ghtabs">{#each ghTabs as t, i}<button class:on={i === 0}>{t}</button>{/each}</div>
      <div class="ribbon">
        {#each groups as [name, parts]}
          <div class="group">
            <div class="cells">{#each parts as cols}<div class="part">{#each cols as col}<div>{#each col as n}<button aria-label={n}><svg viewBox="0 0 25 24">{@html gi[n]}</svg></button>{/each}</div>{/each}</div>{/each}</div>
            <div class="gname"><span>{name}</span><svg viewBox="0 0 9 9"><path d="M4.500 1V8M1 4.500H8" stroke="#999" stroke-width="1.500" /><path d="M2 5H7L4.500 8Z" fill="#999" /></svg></div>
          </div>
        {/each}
      </div>
      <div class="bar2">
        <button class="ic" aria-label="Open"><svg viewBox="0 0 24 24"><path d="M5 2H14L18 6V14H5Z" fill="#fff" stroke="#888" /><path d="M2 22V12H8L10 10H21V22Z" fill="#66c942" stroke="#2c7516" /></svg></button>
        <button class="ic" aria-label="Save"><svg viewBox="0 0 24 24"><path d="M1 2H23V23H4L1 20Z" fill="#2f74d0" stroke="#14305f" stroke-width="1.500" /><rect x="5" y="3" width="14" height="8" fill="#dce9fb" /><path d="M7 5.500H17M7 8.500H17" stroke="#89a" /><rect x="6" y="14" width="12" height="8" fill="#9db7dd" stroke="#14305f" /><rect x="8" y="15" width="4" height="6" fill="#14305f" /></svg></button>
        <select aria-label="Zoom"><option>64%</option></select>
        <button class="ic" aria-label="Zoom extents"><svg viewBox="0 0 24 24"><path d="M3 9V3H9M15 3H21V9M21 15V21H15M9 21H3V15" fill="none" stroke="#111" stroke-width="3.500" /><path d="M9 9L15 15M15 9L9 15" stroke="#111" stroke-width="2" /></svg></button><b>▾</b>
        <button class="ic" aria-label="Preview"><svg viewBox="0 0 24 24"><path d="M1 13Q12 0 23 13Q12 23 1 13Z" fill="#fff" stroke="#17506b" stroke-width="1.800" /><circle cx="12" cy="12" r="6" fill="#5fb6d9" stroke="#17506b" /><circle cx="12" cy="12" r="3" fill="#111" /></svg></button><b>▾</b>
        <button class="ic" aria-label="Sketch"><svg viewBox="0 0 24 24"><path d="M1 9Q5 7 4 14Q3 22 10 20" fill="none" stroke="#222" stroke-width="1.800" /><path d="M10 13L20 2L21 6L24 6L22 12L15 19Z" fill="#e23c30" /><path d="M15 19L22 12L23 14L16 20Z" fill="#8f120b" /><path d="M10 13L15 19L7 22Z" fill="#e9cf9e" stroke="#222" /></svg></button>
        <span class="gap"></span>
        <button class="ic" aria-label="No preview"><svg viewBox="0 0 24 24"><path d="M4 13L10 2L20 3L20 14Z" fill="#eee" stroke="#888" /><ellipse cx="12" cy="15" rx="9.500" ry="5" fill="#ddd" stroke="#888" /><ellipse cx="12" cy="17" rx="10" ry="5" fill="#222" /></svg></button>
        <button class="ic" aria-label="Wireframe"><svg viewBox="0 0 24 24"><g fill="#fff" stroke="#444" stroke-width="1.300"><path d="M3 11L14 2L22 11L12 21Z" /><ellipse cx="17" cy="7" rx="4" ry="6" transform="rotate(-40 17 7)" /><ellipse cx="8" cy="16" rx="4" ry="6.500" transform="rotate(-40 8 16)" /><ellipse cx="17" cy="7" rx="2" ry="3" transform="rotate(-40 17 7)" /></g></svg></button>
        <button class="ic on" aria-label="Shaded"><svg viewBox="0 0 24 24"><path d="M2 11Q3 8 13 2Q21 1 23 9Q22 13 12 22Q3 22 2 11Z" fill="#c3160f" stroke="#5a0604" /><ellipse cx="8" cy="15" rx="4.500" ry="7" transform="rotate(-35 8 15)" fill="#a3100a" /><path d="M9 7L15 3L19 7L14 11Z" fill="#ee5348" /></svg></button>
        <i class="sep wide"></i>
        <button class="ic" aria-label="Selected only"><svg viewBox="0 0 24 24"><path d="M2 13L8 7L17 15L12 22Q3 22 2 13Z" fill="#ddd" stroke="#666" /><path d="M8 7L13 2Q20 1 23 9L17 15Z" fill="#4fae1b" stroke="#235a08" /><path d="M13 5L18 5L16 8Z" fill="#b6ec8d" /><path d="M3 6L22 21" stroke="#222" stroke-width="1.500" /></svg></button>
        <button class="ic" aria-label="Mesh quality"><svg viewBox="0 0 24 24"><circle cx="12" cy="12" r="10" fill="#eee" stroke="#555" /><path d="M12 2A10 10 0 0 0 12 22Z" fill="#e68a22" /><path d="M12 2V22" stroke="#444" /></svg></button>
        <i class="sep"></i>
        <button class="ic" aria-label="Render"><svg viewBox="0 0 24 24"><path d="M7 2L17 2L22 7L22 16L16 22H8L2 17V7Z" fill="#5c9fe6" stroke="#1d4f91" /><path d="M7 3H16L18 7L12 12L4 10Z" fill="#b9dafc" /></svg></button><b>▾</b>
      </div>
      <div class="canvas">
        <div class="world">
          <svg width="1541" height="900">
            <defs>
              <linearGradient id="std" x2="0" y2="1"><stop offset="0" stop-color="#a6a3b8" /><stop offset="1" stop-color="#85829c" /></linearGradient>
              <linearGradient id="off" x2="0" y2="1"><stop offset="0" stop-color="#8f8f8f" /><stop offset="1" stop-color="#828282" /></linearGradient>
            </defs>
            <g fill="none" stroke="#5a5852" stroke-width="2">{#each wires as d}<path {d} />{/each}<path d="M1205 843H1228" stroke-width="3" stroke-dasharray="3 3" /></g>
            {#each doubles as d}<path {d} fill="none" stroke="#6a675f" stroke-width="3" /><path {d} fill="none" stroke="#a8a398" stroke-width="1" />{/each}
            <g fill="none" stroke="#ec6a48" stroke-width="2">{#each reds as d}<path {d} />{/each}</g>
            <path d="M1000 503L1022 501V506ZM1158 488L1168 484V490ZM1298 512L1321 515V517L1298 518Z" fill="#f0572f" />
            {#each nodes as n}
              <g class={n.k}>
                {#each n.i as [, y]}<circle class="port" cx={n.x - 1} cy={y} r="2" />{/each}
                {#each n.o as [, y]}<circle class="port" cx={n.x + n.w + 1} cy={y} r="2" />{/each}
                {#if n.jag}<path class="body" d="M914 632{'l-2 3l2 3'.repeat(12)}H944V632Z" />{:else}<rect class="body" x={n.x} y={n.y} width={n.w} height={n.h} rx="2" />{/if}
                <rect class="lab" x={n.lx} y={n.y + 1} width="16" height={n.h - 2} rx="2" />
                <text class="name" class:bold={n.b} transform="translate({n.lx + 11} {n.y + n.h / 2}) rotate(-90)">{n.t}</text>
                {#each n.i as [t, y]}<text class="pt" x={n.lx - 4} y={y + 2} text-anchor="end">{t}</text>{/each}
                {#each n.o as [t, y]}<text class="pt" x={n.lx + 19} y={y + 2}>{t}</text>{/each}
              </g>
            {/each}
            <rect x="1140" y="835" width="64" height="16" rx="8" fill="#a2a2a2" stroke="#555" stroke-width="1.500" />
            <circle class="port" cx="1336" cy="546" r="2" /><circle class="port" cx="1411" cy="546" r="2" />
          </svg>
          {#each sliders as [t, x, y, lw, width, knob, v, side]}
            {@const track = width - lw - 1}
            <label class="slider" style="left:{x}px;top:{y}px;width:{width}px">
              <span style="width:{lw}px">{t}</span>
              <div><input type="range" step="any" value={((knob - x - lw - 3) / (track - 5)) * 100} /><output style={side > 0 ? `left:${knob - x - lw + 4}px` : `right:${x + width - knob + 4}px`}>{v}</output></div>
            </label>
          {/each}
          {#each toggles as [x, y]}<button class="toggle" style="left:{x}px;top:{y}px"><span>Toggle</span><b>True</b></button>{/each}
          <div class="note">No data was<br />collected.</div>
        </div>
        <div class="widgets">
          <svg viewBox="0 0 24 24"><path d="M4 6L7 4L10 6V19L6 21L4 19Z" fill="#fff" stroke="#333" stroke-width="1.500" /><path d="M13 7L16 4L21 7L15 21L10 21L9 18Z" fill="#f1a321" stroke="#333" stroke-width="1.500" /></svg>
          <svg viewBox="0 0 24 24">{@html gi.graph}</svg>
        </div>
        <svg class="compass" viewBox="0 0 50 50">
          <path d="M5 30Q2 14 22 7" fill="none" stroke="#000" stroke-width="4" /><path d="M1 5L5 6L9 4L9 9L6 13L3 9Z" fill="#000" />
          <circle cx="27" cy="28" r="20" fill="#e4e4e4" stroke="#444" stroke-width="1.500" /><circle cx="27" cy="28" r="18" fill="none" stroke="#fff" stroke-width="2" /><circle cx="27" cy="28" r="15" fill="#cfcfcf" /><circle cx="27" cy="28" r="9" fill="#dedede" />
          <path d="M14 15L20 17L16 21ZM40 15L34 17L38 21ZM14 41L20 39L16 35ZM40 41L34 39L38 35Z" fill="#fff" />
        </svg>
      </div>
      <footer class="ghstatus"><svg viewBox="0 0 16 16"><circle cx="8" cy="8" r="7.500" fill="#1d5fae" stroke="#0c2d5c" /><path d="M8 3V9M8 11V13" stroke="#fff" stroke-width="2.500" /></svg><span>Autosave complete (6 seconds ago)</span><em>0.9.0076</em><i class="grip"></i></footer>
    </div>
  </section>
</div>

<style>
  :global(body) { margin: 0; background: #17858c; }
  .desk { display: grid; grid-template-columns: 3px minmax(0, 1fr) minmax(0, 1fr); min-height: 100vh; font: 11px/14px 'Liberation Sans', Arial, sans-serif; color: #222; overflow: hidden; }
  button, input, select { font: inherit; color: inherit; margin: 0; padding: 0; border: 0; background: none; }
  a { color: inherit; text-decoration: none; }
  svg { display: block; }
  .wallpaper { background: linear-gradient(#0c8189 17px, #57a5ab 17px 60px, #12848b 60px 257px, #a9d0d2 257px 300px, #52a7ab 300px 348px, #147e85 348px); }

  .rhino { position: relative; display: flex; flex-direction: column; padding: 0 7px 7px 8px; background: #ebebeb; overflow: hidden; }
  .title { display: grid; grid-template-columns: 1fr auto 1fr; height: 30px; align-items: center; }
  .title h1 { margin: 0; font: 400 14px/30px 'Noto Sans', 'Open Sans', sans-serif; color: #444; white-space: nowrap; }
  .app { width: 16px; height: 16px; margin-left: 2px; }
  .controls { display: flex; justify-self: end; align-self: start; color: #333; }
  .controls button { width: 27px; height: 21px; display: grid; place-items: center; }
  .controls svg { width: 12px; height: 12px; }
  .controls .close { width: 45px; background: #bcbcbc; }
  .content { flex: 1; display: flex; flex-direction: column; background: #e1e5ee; }
  .menu { display: flex; flex-wrap: wrap; align-content: flex-start; column-gap: 15px; height: 41px; padding: 1px 40px 0 7px; background: #f4f6f8; font: 11px/19px 'Noto Sans', 'Open Sans', sans-serif; color: #777; }
  .command { margin: 1px 0 5px 6px; border-left: 1px solid #aab2c4; background: #fff; font-size: 12px; }
  .history { display: flex; justify-content: space-between; height: 28px; border-bottom: 1px solid #888; padding-left: 1px; }
  .history p { margin: 1px 0; }
  .scrollv { width: 16px; background: #f2f2f2; display: grid; place-items: center; }
  .scrollv svg { width: 10px; height: 20px; }
  .prompt { display: flex; height: 19px; align-items: center; padding-left: 1px; line-height: 16px; }
  .prompt label { font-weight: 700; padding-bottom: 2px; }
  .prompt input { flex: 1; }
  .spin { display: grid; width: 14px; margin-right: 2px; }
  .spin button { height: 8px; font-size: 5px; line-height: 6px; border: 1px solid #aaa; background: #eee; }
  .tooltabs { display: flex; height: 15px; margin: 0 0 0 6px; border-bottom: 1px solid #aab3ca; }
  .tooltabs button { position: relative; height: 15px; background: #d6ddf0; border-top: 1px solid #9fabc5; white-space: nowrap; overflow: hidden; text-align: left; padding-left: 8px; line-height: 14px; flex: none; }
  .tooltabs button::before { content: ''; position: absolute; left: -2px; top: -1px; width: 7px; height: 18px; background: #d6ddf0; border-left: 1px solid #8f9bb8; transform: skewX(-30deg); }
  .tooltabs .on, .tooltabs .on::before { background: #fff; }
  .tooltabs button:nth-child(10) { padding-left: 5px; }
  .tooltabs button.more { width: 16px; border-left: 1px solid #999; padding: 0 2px; box-sizing: border-box; font-size: 16px; line-height: 11px; font-weight: 700; }
  .tooltabs .more::before { display: none; }
  .gear { width: 16px; height: 16px; flex: none; margin-left: auto; margin-top: -2px; }
  .toolbar { display: flex; align-items: center; box-sizing: border-box; height: 32px; margin: 0 0 4px; padding-left: 6px; border-top: 1px solid #c4cad8; background: linear-gradient(#fff, #dfe3ec); overflow: hidden; flex: none; }
  .toolbar.first { height: 31px; margin-bottom: 5px; border-top: 0; }
  .toolbar.last { height: 31px; }
  .tool { position: relative; width: 28px; height: 28px; flex: none; display: grid; place-items: center; }
  .tool svg { width: 21px; height: 21px; overflow: visible; }
  .fly { position: absolute; right: 0; bottom: 1px; width: 6px; height: 6px; background: #777; clip-path: polygon(100% 0, 100% 100%, 0 100%); }
  .work { flex: 1; display: flex; }
  .palette { width: 64px; box-sizing: border-box; padding: 10px 4px 0 0; display: grid; grid-template-columns: 28px 28px; grid-auto-rows: 28px; align-content: start; border-top: 1px solid #aab2c4; }
  .views { flex: 1; min-width: 0; display: flex; flex-direction: column; padding-top: 5px; }
  .viewport { position: relative; flex: 1; min-height: 0; background: linear-gradient(#505050, #484848 35%, #454545 45%, #6a6a6a 62%, #7c7c7c 80%, #858585); }
  .viewport > svg { position: absolute; width: 100%; height: 100%; }
  .axes { font: 13px 'DejaVu Sans', sans-serif; fill: #5a5a5a; }
  .vname { position: absolute; left: 0; top: 0; z-index: 1; display: flex; height: 18px; background: #8aa5c4; font: 11px/18px 'Noto Sans', sans-serif; color: #23344c; padding-left: 9px; }
  .vname b { border-left: 1px solid #223; margin-left: 10px; width: 11px; font-size: 8px; }
  .viewtabs { display: flex; height: 26px; font: 14px/26px 'Noto Sans', 'Open Sans', sans-serif; color: #444; }
  .viewtabs button { position: relative; height: 25px; padding: 0 8px 0 14px; background: #d9deed; border-right: 1px solid #a9b0c2; border-bottom: 1px solid #a9b0c2; clip-path: polygon(0 0, 100% 0, 100% 100%, 10px 100%, 0 55%); }
  .viewtabs .on { background: #fff; }
  .viewtabs .plus { width: 37px; background: #e1e5ee; }
  .plus svg { width: 10px; height: 10px; }
  .panel { width: 229px; margin: 11px 0 2px 8px; border: 1px solid #b3b9c7; background: #fff; display: flex; flex-direction: column; font-size: 12px; overflow: hidden; }
  .ptabs { display: flex; height: 22px; background: #d9deed; }
  .ptabs button { width: 51px; flex: none; display: flex; align-items: center; gap: 3px; padding-left: 4px; border-right: 1px solid #a9b0c2; background: #d6ddf0; white-space: nowrap; overflow: hidden; border-radius: 3px 8px 0 0; box-sizing: border-box; }
  .ptabs .on { background: #f6f7fa; }
  .ptabs svg { width: 15px; height: 15px; flex: none; }
  .ptools { display: flex; height: 21px; align-items: center; gap: 7px; padding-left: 4px; background: #e9ecf2; border-bottom: 1px solid #c4cad8; }
  .ptools svg { width: 14px; height: 14px; }
  .tablewrap { flex: 1; }
  table { border-collapse: collapse; table-layout: fixed; width: 100%; }
  th { height: 23px; padding: 0; font-weight: 400; font-size: 11px; width: 17px; border-right: 1px solid #eee; }
  th.n { width: 73px; text-align: left; padding-left: 6px; border: 0; }
  th.mat { width: auto; text-align: left; padding-left: 3px; }
  td { height: 17px; padding: 0; line-height: 16px; white-space: nowrap; font-size: 11px; }
  td.n { padding-left: 8px; }
  td svg { width: 13px; height: 13px; margin: auto; }
  .cur td.n { font-weight: 700; }
  .sel { background: #3393f3; color: #fff; }
  .swatch { display: block; width: 11px; height: 11px; margin: auto; background: #000; }
  .sel .swatch { outline: 1px solid #fff; width: 10px; height: 10px; }
  .ball { display: block; width: 10px; height: 10px; margin-left: 1px; border: 1px solid #e8e8e8; border-radius: 50%; }
  .sel .ball { background: #fff; }
  .hscroll { display: flex; justify-content: space-between; height: 16px; background: #f0f0f0; font: 700 15px/13px 'Liberation Sans', sans-serif; color: #555; }
  .hscroll button { width: 17px; }
  .hscroll span { width: 107px; margin-right: auto; background: #cdcdcd; }
  .snaps { display: flex; align-items: center; height: 30px; padding-left: 11px; font-size: 11px; }
  .snaps label { display: flex; align-items: center; gap: 5px; flex: none; white-space: nowrap; }
  .snaps input { appearance: none; width: 13px; height: 13px; box-sizing: border-box; border: 1px solid #777; background: #fff; }
  .snaps .dim { background: #e4e7ee; border-color: #aaa; }
  .status { display: flex; height: 19px; border-top: 1px solid #a9b0c2; font-size: 12px; line-height: 18px; }
  .status span { flex: none; box-sizing: border-box; overflow: hidden; white-space: nowrap; padding-left: 3px; border-right: 1px solid #a9b0c2; }
  .status b { display: inline-block; width: 13px; height: 13px; background: #000; vertical-align: -3px; margin-right: 3px; }

  .dialog { position: absolute; right: 0; top: 145px; width: 38px; height: 298px; box-sizing: border-box; border: solid #cfcfcf; border-width: 1px 0 1px 1px; background: #ebebeb; overflow: hidden; white-space: nowrap; }
  .dtitle { display: flex; gap: 7px; height: 28px; align-items: center; padding-left: 9px; font: 14px 'Noto Sans', sans-serif; }
  .dtitle svg { width: 15px; height: 12px; flex: none; }
  .dbody { margin-left: 7px; height: 255px; border: solid #d5d5d5; border-width: 1px 0 1px 1px; background: #f0f0f0; padding: 11px 0 0 11px; box-sizing: border-box; }
  .bar { height: 20px; border: 1px solid #999; background: repeating-linear-gradient(90deg, #fff 0 2px, #3393f3 2px 9px) content-box; }
  .dialog ul { list-style: none; margin: 26px 0 0; padding: 0 0 0 2px; height: 186px; border: 1px solid #666; border-right: 0; background: #fff; font: 10px/14px 'Noto Sans', sans-serif; }
  .dialog .sc { margin-top: 18px; padding-left: 2px; font-size: 8px; }

  .gh { padding: 0 7px 7px 9px; background: #22dcfc; display: flex; flex-direction: column; z-index: 1; }
  .gh .title h1 { color: #215863; }
  .gh .close { background: #c75050; }
  .ghbody { flex: 1; margin-right: 2px; display: flex; flex-direction: column; background: #efefef; color: #222; }
  .ghmenu { display: flex; align-items: center; height: 25px; gap: 19px; padding: 0 8px 0 14px; background: linear-gradient(90deg, #eee, #fff); }
  .ghmenu span { margin-left: auto; }
  .ghtabs { display: flex; height: 22px; color: #777; }
  .ghtabs button { padding: 0 9px; line-height: 23px; }
  .ghtabs .on { padding: 0 6px; box-sizing: border-box; width: 54px; text-align: left; border: 1px solid #999; border-bottom: 0; border-radius: 6px 6px 0 0; background: #fafafa; color: #111; line-height: 19px; }
  .ribbon { display: flex; gap: 4px; align-items: flex-start; height: 87px; padding: 2px 2px 0; box-sizing: border-box; border-top: 1px solid #999; border-radius: 0 8px 0 0; background: linear-gradient(#cdcdcd, #f2f2f2); margin-bottom: 1px; }
  .group { border: 1px solid #777; border-radius: 5px; background: linear-gradient(#ccc, #eaeaea); overflow: hidden; height: 72px; }
  .cells { display: flex; height: 58px; padding: 0 1px; box-sizing: border-box; }
  .part { display: flex; }
  .part + .part { margin-left: 5px; border-left: 1px solid #aaa; padding-left: 4px; }
  .cells button { width: 28px; height: 28px; display: grid; place-items: center; }
  .cells svg { width: 25px; height: 24px; }
  .gname { display: flex; align-items: center; height: 14px; background: #222; color: #fff; line-height: 13px; }
  .gname span { flex: 1; text-align: center; }
  .gname svg { width: 9px; height: 9px; margin-right: 2px; }
  .bar2 { display: flex; align-items: center; height: 32px; gap: 3px; padding: 0 4px; border-top: 2px solid #888; box-sizing: border-box; background: linear-gradient(#fff, #f2f2f2); }
  .ic { width: 26px; height: 28px; display: grid; place-items: center; box-sizing: border-box; flex: none; }
  .ic svg { width: 22px; height: 22px; }
  .ic.on { border: 1px solid #3b96e8; background: #d9ebfb; }
  .bar2 b { width: 8px; font-size: 10px; }
  .bar2 select { width: 70px; height: 25px; margin: 0 0 0 9px; border: 1px solid #999; background: #fff; font: 12px 'Noto Sans', sans-serif; }
  .gap { flex: 1; }
  .sep { width: 1px; height: 20px; background: #bbb; }
  .sep.wide { margin: 0 6px; }
  .canvas { position: relative; flex: 1; overflow: hidden; border-left: 1px solid #888; box-sizing: border-box; background: repeating-linear-gradient(90deg, transparent 0 91px, #00000020 91px 92px, transparent 92px 96px), repeating-linear-gradient(transparent 0 14px, #00000020 14px 15px, transparent 15px 32px), #d4d0c8; }
  .world { position: absolute; left: -782px; top: -197px; width: 1541px; height: 900px; font: 7px/9px 'Noto Sans', sans-serif; }
  .world > svg { position: absolute; inset: 0; }
  .port { fill: #fff; stroke: #111; stroke-width: 1.5; }
  .body { fill: url(#std); stroke: #444; stroke-width: 1.5; }
  .lab { fill: #383838; stroke: #1c1c1c; }
  .off .body { fill: url(#off); stroke: #666; }
  .off .lab { fill: #8a8a8a; stroke: #555; }
  .sel .body { fill: #ff9b1e; }
  .white .body { fill: #e6e6e6; }
  .name { font: 500 9px 'Noto Sans', sans-serif; fill: #fff; text-anchor: middle; }
  .name.bold { font-weight: 700; }
  .off .name { fill: #444; }
  .pt { font: 7px 'Noto Sans', sans-serif; fill: #333; }
  .off .pt { fill: #555; }
  .slider { position: absolute; display: flex; height: 13px; box-sizing: border-box; border: 1px solid #444; border-radius: 2px; background: #e2e2e4; }
  .slider::after { content: ''; position: absolute; right: -4px; top: 4px; width: 3px; height: 3px; border: 1px solid #111; border-radius: 50%; background: #fff; }
  .slider span { flex: none; box-sizing: border-box; background: #a19eb4; border-right: 1px solid #444; text-align: center; line-height: 11px; }
  .slider div { position: relative; flex: 1; background: linear-gradient(#f0f0f0, #ccc); }
  .slider div::before { content: ''; position: absolute; inset: 3px 5px 4px; background: repeating-linear-gradient(90deg, #bbb 0 1px, transparent 1px 10px); }
  .slider input { position: absolute; inset: 0; width: 100%; height: 11px; appearance: none; }
  .slider input::-webkit-slider-thumb { appearance: none; width: 5px; height: 5px; box-sizing: border-box; border: 1px solid #111; border-radius: 50%; background: #fff; }
  .slider output { position: absolute; top: 0; background: #e0e0e0; line-height: 9px; padding: 0 1px; }
  .toggle { position: absolute; display: flex; width: 68px; height: 14px; border: 1px solid #444; border-radius: 2px; background: #a19eb4; line-height: 11px; }
  .toggle span { width: 34px; text-align: center; }
  .toggle b { flex: 1; height: 12px; background: #333; color: #fff; font-style: italic; font-weight: 400; }
  .toggle::after { content: ''; position: absolute; right: -4px; top: 4px; width: 3px; height: 3px; border: 1px solid #111; border-radius: 50%; background: #fff; }
  .note { position: absolute; left: 1337px; top: 524px; width: 74px; height: 45px; box-sizing: border-box; border: 1px solid #333; border-radius: 2px; background: #fff955; color: #d8cf45; font: 8px/8px 'Liberation Mono', monospace; padding-top: 13px; text-align: center; }
  .widgets { position: absolute; left: 0; bottom: 0; display: flex; gap: 4px; padding: 1px 5px 0 0; border: 1px solid #777; background: linear-gradient(90deg, #eee, #aaa); }
  .widgets svg { width: 25px; height: 25px; }
  .compass { position: absolute; right: 8px; bottom: 7px; width: 50px; height: 50px; }
  .ghstatus { display: flex; align-items: center; height: 25px; background: linear-gradient(90deg, #f0f0f0, #fff); padding: 0 1px 0 3px; gap: 4px; }
  .ghstatus svg { width: 15px; height: 15px; }
  .ghstatus em { margin-left: auto; font: 11px 'Noto Sans', sans-serif; color: #777; }
  .grip { width: 11px; height: 11px; background: radial-gradient(circle, #aaa 1px, transparent 1px) 0 0 / 4px 4px; clip-path: polygon(100% 0, 100% 100%, 0 100%); }
</style>
